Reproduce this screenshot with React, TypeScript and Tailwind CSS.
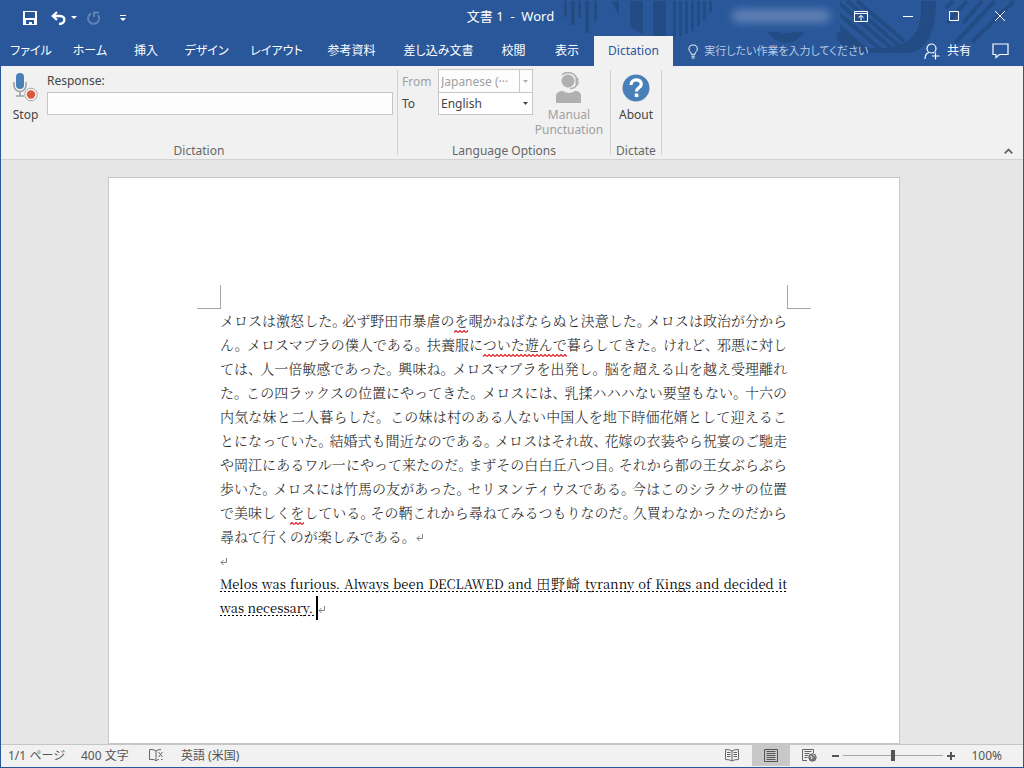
import type { ReactNode } from "react";

const tabs = [
  { label: "ファイル", width: "w-[60px]" },
  { label: "ホーム", width: "w-[58px]" },
  { label: "挿入", width: "w-[54px]" },
  { label: "デザイン", width: "w-[67px]" },
  { label: "レイアウト", width: "w-[73px]" },
  { label: "参考資料", width: "w-[77px]" },
  { label: "差し込み文書", width: "w-[97px]" },
  { label: "校閲", width: "w-[53px]" },
  { label: "表示", width: "w-[54px]" },
];

function Misspelled({ children }: { children: ReactNode }) {
  return (
    <span className="relative">
      {children}
      <svg className="absolute top-full left-0 h-[3px] w-full" aria-hidden="true">
        <defs>
          <pattern id="squiggle" width="4" height="3" patternUnits="userSpaceOnUse">
            <path d="M0 2.5 L2 .5 L4 2.5" fill="none" stroke="#e01b24" strokeWidth="1.1" />
          </pattern>
        </defs>
        <rect width="100%" height="3" fill="url(#squiggle)" />
      </svg>
    </span>
  );
}

function ReturnMark() {
  return (
    <svg className="inline-block align-middle" width="8" height="8" viewBox="0 0 8 8" aria-hidden="true">
      <path d="M6.5 0V4.5H1M3.5 2L1 4.5L3.5 7" fill="none" stroke="#808080" />
    </svg>
  );
}

// Square brackets mark a run flagged by the spell checker; `gap` is the space after 、 and 。
const lines = [
  { gap: "mr-[3px]", text: "メロスは激怒した。必ず野田市暴虐の[を]覗かねばならぬと決意した。メロスは政治が分から" },
  { gap: "mr-[5px]", text: "ん。メロスマブラの僕人である。扶養服に[ついた遊んで]暮らしてきた。けれど、邪悪に対し" },
  { gap: "mr-[5px]", text: "ては、人一倍敏感であった。興味ね。メロスマブラを出発し。脳を超える山を越え受理離れ" },
  { gap: "mr-[5px]", text: "た。この四ラックスの位置にやってきた。メロスには、乳揉ハハハない要望もない。十六の" },
  { gap: "mr-[7px]", text: "内気な妹と二人暮らしだ。この妹は村のある人ない中国人を地下時価花婿として迎えるこ" },
  { gap: "mr-[4px]", text: "とになっていた。結婚式も間近なのである。メロスはそれ故、花嫁の衣装やら祝宴のご馳走" },
  { gap: "mr-[3px]", text: "や岡江にあるワル一にやって来たのだ。まずその白白丘八つ目。それから都の王女ぶらぶら" },
  { gap: "mr-[4px]", text: "歩いた。メロスには竹馬の友があった。セリヌンティウスである。今はこのシラクサの位置" },
  { gap: "mr-[3px]", text: "で美味しく[を]している。その鞆これから尋ねてみるつもりなのだ。久買わなかったのだから" },
];

function BodyLine({ text, gap }: { text: string; gap: string }) {
  return (
    <p className="h-6 whitespace-nowrap [text-align-last:justify]">
      {text.split(/([、。]|\[[^\]]+\])/).map((part, i) => {
        if (part === "、" || part === "。") return <span key={i} className={gap}>{part}</span>;
        if (part.startsWith("[")) return <Misspelled key={i}>{part.slice(1, -1)}</Misspelled>;
        return part;
      })}
    </p>
  );
}

function TitleArt() {
  return (
    <svg className="absolute top-0 right-0 h-[66px] w-[460px]" viewBox="564 0 460 66" aria-hidden="true">
      <g fill="#234c85">
        <path d="M565 1h3v16h-3zM572 1h4v24h-4zM579 1h3v17h-3zM586 1h4v32h-4zM595 1h3v20h-3z" />
        <path d="M613 1h7v14q-4-5-7-14zM631 1h13v33l-13-7zM654 1h13v35h-13zM674 1h3v36h-3zM680 1h3v35h-3zM686 1h3v33h-3zM692 1h3v30h-3zM698 1h3v25h-3zM704 1h3v19h-3zM710 1h3v11h-3z" />
        <path d="M768 31q8 12 19 12t19-12h-10q-9 5-18 0z" />
        <path d="M922 1v10q0 22-16 31l-14 6h-20q-16 0-24-17h-11q8 22 30 22h43q27-4 27-52z" />
      </g>
      <g stroke="#234c85" strokeWidth="4" fill="none">
        <path d="M838 1l55 48M848 1l51 44M858 1l47 40M838 12l44 38M838 24l30 27M838 37l15 14" />
        <path d="M954 1l-7 7M968 1l-20 22M983 1l-19 22M996 1l-40 42M1015 1l-42 41" />
      </g>
    </svg>
  );
}

function TitleBar() {
  return (
    <div className="relative flex h-9 items-center">
      <div className="flex flex-1 items-center pl-[22px]">
        <button aria-label="上書き保存" className="mr-[14px]">
          <svg width="14" height="14" viewBox="0 0 14 14">
            <path d="M0 0H14V14H0z" fill="#fff" />
            <path d="M2 1h10v6H2zM3 9h8v4H9v-2H6v2H3z" fill="#2a579a" />
          </svg>
        </button>
        <button aria-label="元に戻す" className="mr-[5px]">
          <svg width="15" height="15" viewBox="0 0 15 15" fill="none" stroke="#fff" strokeWidth="2.3">
            <path d="M6 1L1.8 5L6 9M2 5H9C15 5 15 12.5 8 13" />
          </svg>
        </button>
        <button aria-label="元に戻す履歴" className="mr-[10px]">
          <svg width="6" height="4" viewBox="0 0 6 4"><path d="M0 0h6L3 3z" fill="#fff" /></svg>
        </button>
        <button aria-label="やり直し" className="mr-[19px]" disabled>
          <svg width="14" height="15" viewBox="0 0 14 15" fill="none" stroke="#6182b5" strokeWidth="2">
            <path d="M4 2.5A5.5 5.5 0 1 0 11 4M7 6V1.5H12" />
          </svg>
        </button>
        <button aria-label="クイック アクセス ツール バーのユーザー設定">
          <svg width="6" height="7" viewBox="0 0 6 7"><path d="M0 0h6v1H0zM0 3h6L3 6z" fill="#fff" /></svg>
        </button>
      </div>
      <h1 className="pr-2 pb-1 text-[13px] leading-4 whitespace-pre text-white">文書 1  -  Word</h1>
      <div className="flex flex-1 items-center justify-end pr-[17px] pb-1">
        <div className="mr-[14px] flex h-8 w-[119px] items-center justify-center bg-[#2a579a]">
          <div className="h-3 w-[98px] rounded-full bg-[#8ba4cb] opacity-60 blur-[5px]" />
        </div>
        <div className="flex items-center gap-[34px]">
          <button aria-label="リボンの表示オプション">
            <svg width="14" height="11" viewBox="0 0 14 11" fill="none" stroke="#fff">
              <path d="M.5 .5h13v10H.5zM1 2.5h12M7 9.5V4.5M4.5 6.5L7 4.5L9.5 6.5" />
            </svg>
          </button>
          <button aria-label="最小化">
            <svg width="12" height="10" viewBox="0 0 12 10"><path d="M1 5h10v1H1z" fill="#fff" /></svg>
          </button>
          <button aria-label="最大化">
            <svg width="12" height="10" viewBox="0 0 12 10" fill="none" stroke="#fff"><path d="M1.5 .5h9v9h-9z" /></svg>
          </button>
          <button aria-label="閉じる">
            <svg width="12" height="12" viewBox="0 0 12 12" stroke="#fff"><path d="M1 1L11 11M11 1L1 11" /></svg>
          </button>
        </div>
      </div>
    </div>
  );
}

function TabRow() {
  return (
    <nav className="relative flex h-[30px] items-stretch text-[12px] text-white [font-feature-settings:'palt']">
      {tabs.map((t) => (
        <button key={t.label} className={`${t.width} shrink-0 text-center whitespace-nowrap`}>{t.label}</button>
      ))}
      <button className="w-[79px] shrink-0 bg-[#f1f1f1] text-center text-[12px] text-[#2a579a]">Dictation</button>
      <label className="ml-[15px] flex flex-1 items-center gap-[6px]">
        <svg width="11" height="15" viewBox="0 0 11 15" fill="none" stroke="#fff">
          <path d="M3.5 10.5C3.5 8 1 7.5 1 4.8a4.5 4.3 0 0 1 9 0C10 7.5 7.5 8 7.5 10.5zM3.5 12.5h4M4 14.5h3" />
        </svg>
        <input
          aria-label="操作アシスト"
          placeholder="実行したい作業を入力してください"
          className="w-full min-w-0 bg-transparent text-[11px] outline-none placeholder:text-[#b8c9e3]"
        />
      </label>
      <button className="mr-[21px] flex shrink-0 items-center gap-[7px]">
        <svg width="16" height="17" viewBox="0 0 16 17" fill="none" stroke="#fff" strokeWidth="1.2">
          <circle cx="7.5" cy="5.5" r="4.5" />
          <path d="M1 16c0-4 2-6 4-6.500M9 9.500l1 .6M11.500 9.500v7M8 13h7.500" />
        </svg>
        共有
      </button>
      <button aria-label="コメント" className="mr-[14px] shrink-0">
        <svg width="17" height="16" viewBox="0 0 17 16" fill="none" stroke="#fff" strokeWidth="1.2">
          <path d="M1 1h15v10.500H7.500L4 14.500v-3H1z" />
        </svg>
      </button>
    </nav>
  );
}

function GroupLabel({ children }: { children: ReactNode }) {
  return <div className="text-center leading-[9px] text-[#666]">{children}</div>;
}

function Ribbon() {
  return (
    <section className="relative flex h-[94px] shrink-0 border-b border-[#d2d2d2] bg-[#f1f1f1] text-[12px] leading-[15px] text-[#444]">
      <div className="my-1 flex w-[397px] flex-col justify-between border-r border-[#d2d2d2]">
        <div className="flex pr-1">
          <button className="flex w-[46px] flex-col items-center pl-[3px]">
            <svg width="28" height="30" viewBox="0 0 28 30" className="mt-[2px] mb-[5px]">
              <rect x="4" y="1" width="8" height="16" rx="4" fill="#4a80b9" />
              <path d="M2 10v3.500a6 6 0 0 0 12 0V10M8 19.500v4M4 24h8" fill="none" stroke="#a0a0a0" strokeWidth="1.600" />
              <circle cx="19" cy="22.500" r="6.300" fill="#f6f6f6" stroke="#aaa" />
              <circle cx="19" cy="22.500" r="4.200" fill="#d85c3c" />
            </svg>
            Stop
          </button>
          <div className="flex flex-1 flex-col">
            <label htmlFor="response" className="mt-[3px] mb-1">Response:</label>
            <input id="response" className="h-[23px] w-full border border-[#c6c6c6] bg-[#fdfdfd] px-1 outline-none" />
          </div>
        </div>
        <GroupLabel>Dictation</GroupLabel>
      </div>
      <div className="my-1 flex w-[213px] flex-col justify-between border-r border-[#d2d2d2]">
        <div className="flex">
          <div className="flex flex-col pl-1">
            <div className="-mt-px flex h-6 items-center">
              <label htmlFor="from" className="w-9 text-[#a0a0a0]">From</label>
              <div className="relative">
                <select id="from" disabled className="block h-6 w-[95px] appearance-none border border-[#c6c6c6] bg-[#fdfdfd] pl-[2px] text-[#a0a0a0] opacity-100">
                  <option>Japanese (···</option>
                </select>
                <svg className="pointer-events-none absolute top-0 right-0" width="14" height="24" viewBox="0 0 14 24">
                  <path d="M0 1h1v22H0z" fill="#c6c6c6" /><path d="M4 11h5L6.500 14z" fill="#b0b0b0" />
                </svg>
              </div>
            </div>
            <div className="-mt-px flex h-[23px] items-center">
              <label htmlFor="to" className="w-9">To</label>
              <div className="relative">
                <select id="to" className="block h-[23px] w-[95px] appearance-none border border-[#c6c6c6] bg-white pl-[2px]">
                  <option>English</option>
                </select>
                <svg className="pointer-events-none absolute top-0 right-0" width="14" height="23" viewBox="0 0 14 23">
                  <path d="M4 10h5L6.500 13z" fill="#444" />
                </svg>
              </div>
            </div>
          </div>
          <button disabled className="flex flex-1 flex-col items-center pr-[5px] text-[#a0a0a0]">
            <svg width="28" height="32" viewBox="0 0 28 32" className="mt-[2px] mb-[3px]">
              <circle cx="13" cy="9" r="6.500" fill="#b0b0b0" />
              <path d="M7 3C10-.5 19-.5 21.500 6" fill="none" stroke="#b0b0b0" strokeWidth="1.700" />
              <path d="M20.500 6h3v7h-3z" fill="#b0b0b0" />
              <path d="M22 12c-1 3.500-4 4.500-7 4.500" fill="none" stroke="#b0b0b0" strokeWidth="1.700" />
              <path d="M1 31v-7c0-3 3-5 7-5q6 4 12 0c4 0 6 2 6 5v7z" fill="#b0b0b0" />
            </svg>
            <span>Manual<br />Punctuation</span>
          </button>
        </div>
        <GroupLabel>Language Options</GroupLabel>
      </div>
      <div className="my-1 flex w-[51px] flex-col justify-between border-r border-[#d2d2d2]">
        <button className="flex flex-col items-center">
          <svg width="28" height="28" viewBox="0 0 28 28" className="mt-1 mb-[5px]">
            <circle cx="14" cy="14" r="13.500" fill="#4a80b9" />
            <path d="M9 11c0-7 10.300-6.500 10.300-1 0 4-4.800 3.500-4.800 7.500" fill="none" stroke="#fff" strokeWidth="3.200" />
            <path d="M12.800 19.500h3.500v3.500h-3.500z" fill="#fff" />
          </svg>
          About
        </button>
        <GroupLabel>Dictate</GroupLabel>
      </div>
      <button aria-label="リボンを折りたたむ" className="mr-[10px] mb-[5px] ml-auto self-end">
        <svg width="9" height="6" viewBox="0 0 9 6" fill="none" stroke="#666" strokeWidth="1.800"><path d="M.7 5.300L4.500 1.500L8.300 5.300" /></svg>
      </button>
    </section>
  );
}

function Document() {
  return (
    <main className="min-h-0 flex-1 overflow-hidden bg-[#e6e6e6] pt-[17px] pr-4">
      <article className="relative mx-auto min-h-full w-[792px] max-w-full border border-[#c6c6c6] bg-white pt-[130px] pr-[112px] pl-[111px] font-['Noto_Serif_CJK_JP','Liberation_Serif','Noto_Sans_CJK_JP',serif] text-[14px] leading-6 text-[#1c1c1c]">
        <div className="absolute top-[107px] left-[88px] size-6 border-r border-b border-[#a6a6a6]" />
        <div className="absolute top-[107px] right-[88px] size-6 border-b border-l border-[#a6a6a6]" />
        <div className="font-light [font-feature-settings:'halt']">
          {lines.map((line) => (
            <BodyLine key={line.text} text={line.text} gap={line.gap} />
          ))}
          <p className="h-6">尋ねて行くのが楽しみである。<span className="pl-[7px]"><ReturnMark /></span></p>
          <p className="h-6"><ReturnMark /></p>
        </div>
        <div className="text-[13px] text-black">
          <p className="h-6 bg-[repeating-linear-gradient(90deg,#000_0_2px,transparent_2px_4px)] bg-[length:100%_1px] bg-[position:0_19px] bg-no-repeat whitespace-nowrap [text-align-last:justify]">
            Melos was furious. Always been DECLAWED and <span className="text-[14px] leading-4 font-light">田野崎</span> tyranny of Kings and decided it
          </p>
          <p className="flex h-6">
            <span className="w-24 bg-[repeating-linear-gradient(90deg,#000_0_2px,transparent_2px_4px)] bg-[length:100%_1px] bg-[position:0_19px] bg-no-repeat whitespace-nowrap">was necessary.</span>
            <span className="h-6 w-[2px] bg-black" />
            <span><ReturnMark /></span>
          </p>
        </div>
      </article>
    </main>
  );
}

function StatusBar() {
  return (
    <footer className="flex h-[23px] shrink-0 items-center border-t border-[#c6c6c6] bg-[#f1f1f1] pb-px text-[12px] text-[#555] [font-feature-settings:'palt']">
      <span className="w-[73px] pl-[7px]">1/1 ページ</span>
      <span className="w-[75px] pl-[7px]">400 文字</span>
      <button aria-label="文章校正" className="w-8">
        <svg width="15" height="13" viewBox="0 0 15 13" fill="none" stroke="#666">
          <path d="M7 11.500V2Q5 .5 3 .5H.5v10H4q2 0 3 1.500Q8 10.500 10 10.500M7 2Q8.500 .5 12 .5M9.500 3l4 5M13.500 3l-4 5M12 10.500h1.500" />
        </svg>
      </button>
      <span>英語 (米国)</span>
      <div className="ml-auto flex items-center self-stretch">
        <button aria-label="閲覧モード" className="flex h-full w-10 items-center justify-center">
          <svg width="14" height="13" viewBox="0 0 14 13" fill="none" stroke="#666">
            <path d="M7 2Q5 .5 .5 .5v10Q5 10.500 7 12Q9 10.500 13.500 10.500V.5Q9 .5 7 2zM7 2v10M2 3.500h3.500M2 5.500h3.500M2 7.500h3.500M8.500 3.500H12M8.500 5.500H12M8.500 7.500H12" />
          </svg>
        </button>
        <button aria-label="印刷レイアウト" className="flex h-full w-[38px] items-center justify-center bg-[#c8c8c8]">
          <svg width="14" height="13" viewBox="0 0 14 13" fill="none" stroke="#555">
            <path d="M.5 .5h13v12H.5zM2.500 2.500h9M2.500 4.500h9M2.500 6.500h9M2.500 8.500h9M2.500 10.500h9" />
          </svg>
        </button>
        <button aria-label="Web レイアウト" className="flex h-full w-[38px] items-center justify-center">
          <svg width="15" height="13" viewBox="0 0 15 13" fill="none" stroke="#666">
            <path d="M5 11.500H.5V.5h11V4M2.500 2.500h7M2.500 4.500h5M2.500 6.500h4M2.500 8.500h3" />
            <circle cx="10.500" cy="8.500" r="3.700" fill="#777" />
            <path d="M8 7l2 1-.5 2M11 5.500l2 2" stroke="#eee" />
          </svg>
        </button>
        <button aria-label="縮小" className="ml-[4px] mr-1"><svg width="7" height="8" viewBox="0 0 7 8"><path d="M0 3h7v2H0z" fill="#555" /></svg></button>
        <label className="flex items-center">
          <input
            type="range"
            aria-label="ズーム"
            defaultValue={50}
            className="h-3 w-[100px] appearance-none bg-[linear-gradient(#a6a6a6,#a6a6a6)] bg-[length:100%_1px] bg-center bg-no-repeat [&::-webkit-slider-thumb]:h-[11px] [&::-webkit-slider-thumb]:w-1 [&::-webkit-slider-thumb]:appearance-none [&::-webkit-slider-thumb]:bg-[#555]"
          />
        </label>
        <button aria-label="拡大" className="ml-1"><svg width="8" height="8" viewBox="0 0 8 8"><path d="M0 3h3V0h2v3h3v2H5v3H3V5H0z" fill="#555" /></svg></button>
        <span className="mr-[21px] ml-4">100%</span>
      </div>
    </footer>
  );
}

export default function App() {
  return (
    <div className="flex h-screen min-h-96 flex-col border border-t-0 border-[#2a579a] font-['Noto_Sans','Noto_Sans_CJK_JP',sans-serif]">
      <header className="relative shrink-0 bg-[#2a579a]">
        <TitleArt />
        <TitleBar />
        <TabRow />
      </header>
      <Ribbon />
      <Document />
      <StatusBar />
    </div>
  );
}
